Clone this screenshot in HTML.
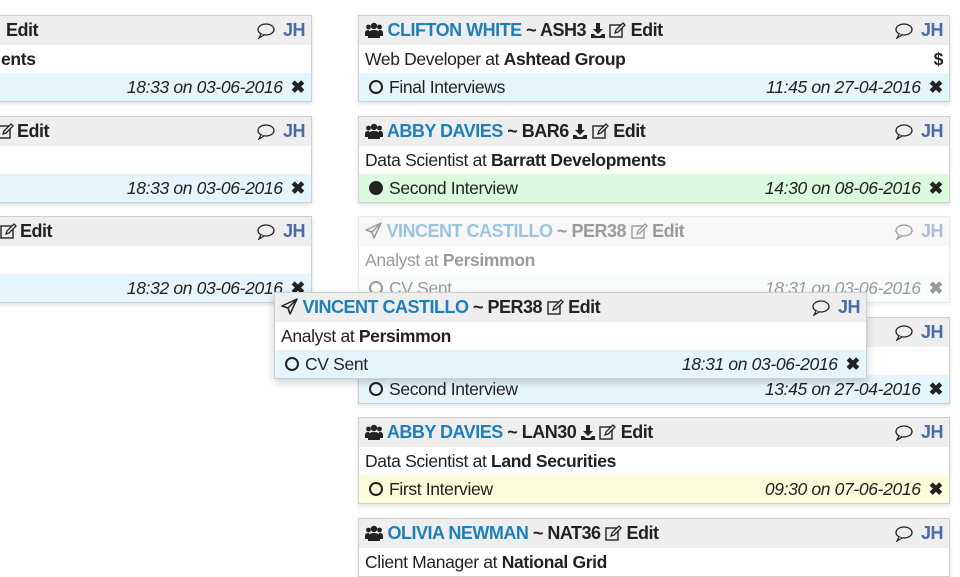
<!DOCTYPE html>
<html><head><meta charset="utf-8"><style>
body{margin:0;width:960px;height:563px;background:#fff;overflow:hidden;position:relative;font-family:"Liberation Sans",sans-serif;font-size:17.5px;color:#222;letter-spacing:-0.35px}
.card{position:absolute;width:590px;border:1px solid #cfcfcf;box-shadow:0 2px 4px rgba(0,0,0,.12);background:#fff}
.r{height:28px;line-height:28px;padding:0 6px;position:relative;white-space:nowrap;overflow:hidden}
.h{background:#eee;font-weight:bold;height:29px;line-height:29px;font-size:18px;letter-spacing:-0.5px}
.n{color:#1f7fba}
.jh{position:absolute;right:6px;top:0;color:#4a6aa8}
.bub{position:absolute;right:36px;top:7px}
.rt{position:absolute;right:6px;top:0}
.blue{background:#e5f5fd}.green{background:#dcfadd}.yellow{background:#fdfcdb}
i{font-style:italic}
.ic{display:inline-block;vertical-align:-2px}
.fade{opacity:.45}
.x{font-weight:bold;margin-left:8px;font-style:normal}
.c{display:inline-block;width:10px;height:10px;border:2px solid #222;border-radius:50%;vertical-align:-1px;margin:0 6px 0 4px}
.c.f{background:#222;width:12px;height:12px;border:1px solid #222}
</style></head><body>
<svg width="0" height="0" style="position:absolute"><defs>
<g id="users"><circle cx="9" cy="4" r="3.2" fill="#222"/><circle cx="3.5" cy="5" r="2.4" fill="#222"/><circle cx="14.5" cy="5" r="2.4" fill="#222"/><path d="M3 16v-4q0-4 6-4t6 4v4z" fill="#222"/><path d="M0 14v-3q0-3 3-3h1v6zM18 14v-3q0-3-3-3h-1v6z" fill="#222"/></g>
<g id="dl"><path d="M5 0h4v6h3l-5 5-5-5h3z" fill="#222"/><path d="M0 11h3l2 2h4l2-2h3v4H0z" fill="#222"/></g>
<g id="ed"><rect x="1" y="3" width="12" height="12" fill="none" stroke="#222" stroke-width="1.4"/><path d="M6 11l1-3 7-7 2 2-7 7z" fill="#fff" stroke="#222" stroke-width="1.3"/></g>
<g id="bub"><ellipse cx="9" cy="6.5" rx="8" ry="5.5" fill="none" stroke="#222" stroke-width="1.3"/><path d="M4 11l-2 4 5-3" fill="#fff" stroke="#222" stroke-width="1.3"/></g>
<g id="pl"><path d="M16 1L1 8l6 2 2 6z M7 10L16 1" fill="none" stroke="#222" stroke-width="1.5" stroke-linejoin="round"/></g>
</defs></svg>

<div class="card" style="left:-280px;top:15px">
<div class="r h"><span style="position:absolute;left:285px">Edit</span><svg class="bub" width="18" height="16"><use href="#bub"/></svg><span class="jh">JH</span></div>
<div class="r"><b style="position:absolute;left:280px">ents</b></div>
<div class="r blue"><span class="rt"><i>18:33 on 03-06-2016</i><span class="x">✖</span></span></div></div>
<div class="card" style="left:-280px;top:116px">
<div class="r h"><svg class="ic" style="position:absolute;left:276px;top:6px" width="17" height="16"><use href="#ed"/></svg><span style="position:absolute;left:296px">Edit</span><svg class="bub" width="18" height="16"><use href="#bub"/></svg><span class="jh">JH</span></div>
<div class="r"></div>
<div class="r blue"><span class="rt"><i>18:33 on 03-06-2016</i><span class="x">✖</span></span></div></div>
<div class="card" style="left:-280px;top:216px">
<div class="r h"><svg class="ic" style="position:absolute;left:279px;top:6px" width="17" height="16"><use href="#ed"/></svg><span style="position:absolute;left:299px">Edit</span><svg class="bub" width="18" height="16"><use href="#bub"/></svg><span class="jh">JH</span></div>
<div class="r"></div>
<div class="r blue"><span class="rt"><i>18:32 on 03-06-2016</i><span class="x">✖</span></span></div></div>

<div class="card" style="left:358px;top:15px">
<div class="r h"><svg class="ic" width="18" height="16"><use href="#users"/></svg> <span class="n">CLIFTON WHITE</span> ~ ASH3 <svg class="ic" width="14" height="15"><use href="#dl"/></svg> <svg class="ic" width="17" height="16"><use href="#ed"/></svg> Edit<svg class="bub" width="18" height="16"><use href="#bub"/></svg><span class="jh">JH</span></div>
<div class="r">Web Developer at <b>Ashtead Group</b><b class="rt">$</b></div>
<div class="r blue"><span class="c"></span>Final Interviews<span class="rt"><i>11:45 on 27-04-2016</i><span class="x">✖</span></span></div></div>

<div class="card" style="left:358px;top:116px">
<div class="r h"><svg class="ic" width="18" height="16"><use href="#users"/></svg> <span class="n">ABBY DAVIES</span> ~ BAR6 <svg class="ic" width="14" height="15"><use href="#dl"/></svg> <svg class="ic" width="17" height="16"><use href="#ed"/></svg> Edit<svg class="bub" width="18" height="16"><use href="#bub"/></svg><span class="jh">JH</span></div>
<div class="r">Data Scientist at <b>Barratt Developments</b></div>
<div class="r green"><span class="c f"></span>Second Interview<span class="rt"><i>14:30 on 08-06-2016</i><span class="x">✖</span></span></div></div>

<div class="card fade" style="left:358px;top:216px">
<div class="r h"><svg class="ic" width="17" height="17"><use href="#pl"/></svg> <span class="n">VINCENT CASTILLO</span> ~ PER38 <svg class="ic" width="17" height="16"><use href="#ed"/></svg> Edit<svg class="bub" width="18" height="16"><use href="#bub"/></svg><span class="jh">JH</span></div>
<div class="r">Analyst at <b>Persimmon</b></div>
<div class="r" style="background:#f6fbfd"><span class="c"></span>CV Sent<span class="rt"><i>18:31 on 03-06-2016</i><span class="x">✖</span></span></div></div>

<div class="card" style="left:358px;top:317px">
<div class="r h"><svg class="bub" width="18" height="16"><use href="#bub"/></svg><span class="jh">JH</span></div>
<div class="r"></div>
<div class="r blue"><span class="c"></span>Second Interview<span class="rt"><i>13:45 on 27-04-2016</i><span class="x">✖</span></span></div></div>

<div class="card" style="left:358px;top:417px">
<div class="r h"><svg class="ic" width="18" height="16"><use href="#users"/></svg> <span class="n">ABBY DAVIES</span> ~ LAN30 <svg class="ic" width="14" height="15"><use href="#dl"/></svg> <svg class="ic" width="17" height="16"><use href="#ed"/></svg> Edit<svg class="bub" width="18" height="16"><use href="#bub"/></svg><span class="jh">JH</span></div>
<div class="r">Data Scientist at <b>Land Securities</b></div>
<div class="r yellow"><span class="c"></span>First Interview<span class="rt"><i>09:30 on 07-06-2016</i><span class="x">✖</span></span></div></div>

<div class="card" style="left:358px;top:518px">
<div class="r h"><svg class="ic" width="18" height="16"><use href="#users"/></svg> <span class="n">OLIVIA NEWMAN</span> ~ NAT36 <svg class="ic" width="17" height="16"><use href="#ed"/></svg> Edit<svg class="bub" width="18" height="16"><use href="#bub"/></svg><span class="jh">JH</span></div>
<div class="r">Client Manager at <b>National Grid</b></div></div>

<div class="card" style="left:274px;top:292px;width:591px;box-shadow:0 3px 8px rgba(0,0,0,.2)">
<div class="r h"><svg class="ic" width="17" height="17"><use href="#pl"/></svg> <span class="n">VINCENT CASTILLO</span> ~ PER38 <svg class="ic" width="17" height="16"><use href="#ed"/></svg> Edit<svg class="bub" width="18" height="16"><use href="#bub"/></svg><span class="jh">JH</span></div>
<div class="r">Analyst at <b>Persimmon</b></div>
<div class="r blue"><span class="c"></span>CV Sent<span class="rt"><i>18:31 on 03-06-2016</i><span class="x">✖</span></span></div></div>
</body></html>
